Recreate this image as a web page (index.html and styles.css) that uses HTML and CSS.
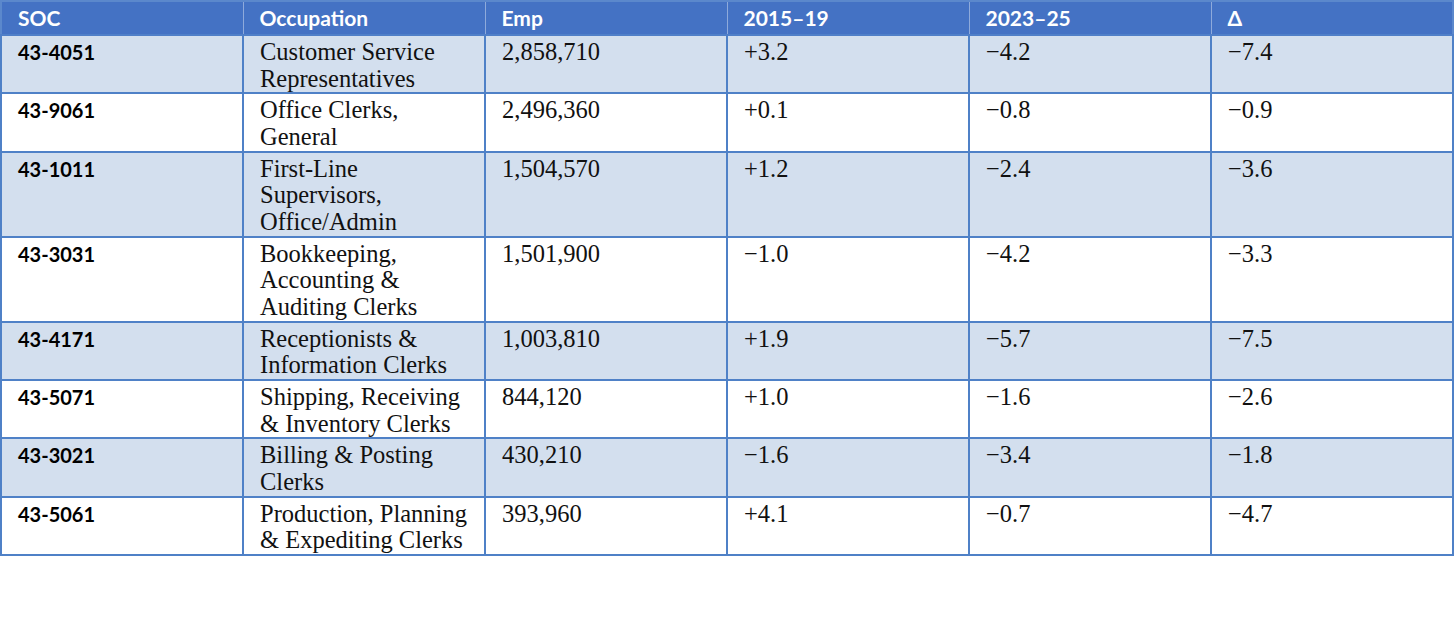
FILE: index.html
```html
<!DOCTYPE html>
<html>
<head>
<meta charset="utf-8">
<link rel="stylesheet" href="styles.css">
</head>
<body>
<table class="data">
  <colgroup>
    <col class="c"><col class="c"><col class="c"><col class="c"><col class="c"><col class="c">
  </colgroup>
  <thead>
    <tr><th>SOC</th><th>Occupation</th><th>Emp</th><th>2015–19</th><th>2023–25</th><th>Δ</th></tr>
  </thead>
  <tbody>
    <tr class="alt"><td class="soc">43-4051</td><td>Customer Service Representatives</td><td>2,858,710</td><td>+3.2</td><td>−4.2</td><td>−7.4</td></tr>
    <tr><td class="soc">43-9061</td><td>Office Clerks, General</td><td>2,496,360</td><td>+0.1</td><td>−0.8</td><td>−0.9</td></tr>
    <tr class="alt"><td class="soc">43-1011</td><td>First-Line Supervisors, Office/Admin</td><td>1,504,570</td><td>+1.2</td><td>−2.4</td><td>−3.6</td></tr>
    <tr><td class="soc">43-3031</td><td>Bookkeeping, Accounting &amp; Auditing Clerks</td><td>1,501,900</td><td>−1.0</td><td>−4.2</td><td>−3.3</td></tr>
    <tr class="alt"><td class="soc">43-4171</td><td>Receptionists &amp; Information Clerks</td><td>1,003,810</td><td>+1.9</td><td>−5.7</td><td>−7.5</td></tr>
    <tr><td class="soc">43-5071</td><td>Shipping, Receiving &amp; Inventory Clerks</td><td>844,120</td><td>+1.0</td><td>−1.6</td><td>−2.6</td></tr>
    <tr class="alt"><td class="soc">43-3021</td><td>Billing &amp; Posting Clerks</td><td>430,210</td><td>−1.6</td><td>−3.4</td><td>−1.8</td></tr>
    <tr><td class="soc">43-5061</td><td>Production, Planning &amp; Expediting Clerks</td><td>393,960</td><td>+4.1</td><td>−0.7</td><td>−4.7</td></tr>
  </tbody>
</table>
</body>
</html>
```
FILE: styles.css
```css
html, body {
  margin: 0;
  padding: 0;
  background: #ffffff;
}
.data {
  width: 1452px;
  table-layout: fixed;
  border-collapse: collapse;
  border: 2px solid #5b88cc;
}
.c { width: 242px; }
.data th {
  background: #4472c4;
  color: #ffffff;
  font-family: Lato, "Open Sans", sans-serif;
  font-weight: 700;
  font-size: 21px;
  text-align: left;
  height: 32px;
  padding: 0 6px 0 16px;
  line-height: 32px;
  border-left: 1px solid #8eaadb;
  border-bottom: 2px solid #4f7fc8;
}
.data td {
  font-family: "Liberation Serif", "DejaVu Serif", serif;
  font-size: 24.5px;
  line-height: 26.66px;
  color: #111111;
  vertical-align: top;
  padding: 3px 6px 0 16px;
  border: 2px solid #4f81c7;
}
.data td.soc {
  font-family: Lato, "Open Sans", sans-serif;
  font-weight: 700;
  font-size: 20px;
  color: #000000;
}
.data tr.alt td {
  background: #d3dfee;
}
```
